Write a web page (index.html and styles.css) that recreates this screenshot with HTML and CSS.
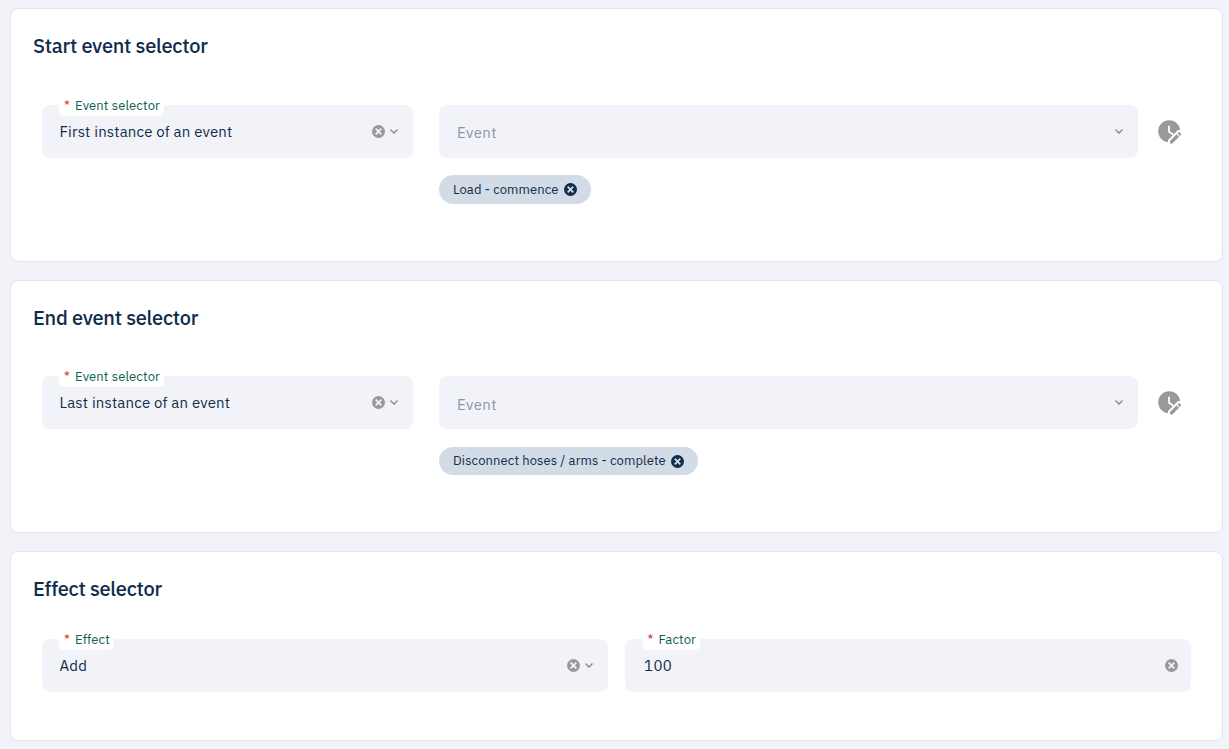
FILE: index.html
```html
<!DOCTYPE html>
<html lang="en">
  <head>
    <meta charset="UTF-8" />
    <meta name="viewport" content="width=device-width, initial-scale=1.0" />
    <title>Event selectors</title>
    <link rel="stylesheet" href="styles.css">
  </head>
  <body>
    <!-- shared icons -->
    <svg class="sprite" aria-hidden="true">
      <symbol id="clear" viewBox="0 0 13 13">
        <circle cx="6.5" cy="6.5" r="6.5" fill="currentColor" />
        <path d="M3.7 3.7l5.6 5.6M9.3 3.7L3.7 9.3" stroke="var(--cross)" stroke-width="1.8" />
      </symbol>
      <symbol id="chevron" viewBox="0 0 8 5">
        <path d="M.5 .6L4 4.1L7.5 .6" fill="none" stroke="currentColor" stroke-width="1.4" />
      </symbol>
      <symbol id="clock-edit" viewBox="0 0 24 24">
        <circle cx="11.2" cy="11.2" r="11" fill="currentColor" />
        <path d="M11 5.8V11.8L15.4 14.8" fill="none" stroke="#fff" stroke-width="1.8" />
        <path d="M10 26V20L20 10L26 10V26Z" fill="#fff" />
        <path d="M12 23.4V21L18.7 14.3L21.1 16.7L14.4 23.4ZM19.5 13.5L20.7 12.3Q21.1 12 21.5 12.3L23.1 13.9Q23.4 14.3 23.1 14.7L21.9 15.9Z" fill="currentColor" />
      </symbol>
    </svg>

    <section class="card">
      <h2>Start event selector</h2>
      <div class="row">
        <div class="field selector">
          <label><span class="required">*</span>Event selector</label>
          <span class="value">First instance of an event</span>
          <svg class="clear"><use href="#clear" /></svg>
          <svg class="chevron"><use href="#chevron" /></svg>
        </div>
        <div class="event">
          <div class="field">
            <span class="placeholder">Event</span>
            <svg class="chevron"><use href="#chevron" /></svg>
          </div>
          <div class="chip">
            <span class="chip-text">Load - commence</span>
            <svg class="clear"><use href="#clear" /></svg>
          </div>
        </div>
        <svg class="clock-edit"><use href="#clock-edit" /></svg>
      </div>
    </section>

    <section class="card">
      <h2>End event selector</h2>
      <div class="row">
        <div class="field selector">
          <label><span class="required">*</span>Event selector</label>
          <span class="value">Last instance of an event</span>
          <svg class="clear"><use href="#clear" /></svg>
          <svg class="chevron"><use href="#chevron" /></svg>
        </div>
        <div class="event">
          <div class="field">
            <span class="placeholder">Event</span>
            <svg class="chevron"><use href="#chevron" /></svg>
          </div>
          <div class="chip">
            <span class="chip-text">Disconnect hoses / arms - complete</span>
            <svg class="clear"><use href="#clear" /></svg>
          </div>
        </div>
        <svg class="clock-edit"><use href="#clock-edit" /></svg>
      </div>
    </section>

    <section class="card effect">
      <h2>Effect selector</h2>
      <div class="row">
        <div class="field">
          <label><span class="required">*</span>Effect</label>
          <span class="value">Add</span>
          <svg class="clear"><use href="#clear" /></svg>
          <svg class="chevron"><use href="#chevron" /></svg>
        </div>
        <div class="field factor">
          <label><span class="required">*</span>Factor</label>
          <span class="value">100</span>
          <svg class="clear"><use href="#clear" /></svg>
        </div>
      </div>
    </section>
  </body>
</html>
```
FILE: styles.css
```css
*,
*::before,
*::after {
  box-sizing: border-box;
}
body {
  margin: 0;
  padding: 8.25px 6px 0 10px;
  background: #f2f3f8;
  color: #0f2d4a;
  font-family: "IBM Plex Sans", Roboto, sans-serif;
  font-size: 15px;
  overflow: hidden;
}
svg {
  display: block;
  flex: none;
}
.sprite {
  position: absolute;
  width: 0;
  height: 0;
}

.card {
  height: 253.5px;
  margin-bottom: 18px;
  padding: 23px 22px 0;
  background: #fff;
  border: 1px solid #e1e5ee;
  border-radius: 8px;
}
h2 {
  margin: 0 0 44.5px;
  font-size: 20px;
  font-weight: 500;
  line-height: 28px;
  letter-spacing: -0.26px;
}
.row {
  display: flex;
  align-items: flex-start;
  padding: 0 9px;
}

.field {
  position: relative;
  display: flex;
  align-items: center;
  height: 53px;
  padding: 0 15px 0 17.5px;
  background: #f2f3f8;
  border-radius: 8px;
}
.selector {
  width: 371px;
  margin-right: 26px;
}
.event {
  width: 699px;
}
.value,
.placeholder {
  flex: 1;
  line-height: 20px;
}
.value {
  padding-top: 0.6px;
  letter-spacing: 0.18px;
}
.placeholder {
  padding: 3.6px 0 0 0.5px;
  color: #8797aa;
  letter-spacing: 0.35px;
}
/* label sits on the top edge of the field */
label {
  position: absolute;
  top: -10px;
  left: 17px;
  display: flex;
  height: 21px;
  padding: 0 4px 0 5px;
  background: #fff;
  border-radius: 5px;
  color: #0b6051;
  font-size: 13px;
  line-height: 21px;
  letter-spacing: 0.12px;
  white-space: nowrap;
}
.required {
  width: 11px;
  color: #d0342c;
}

.clear {
  --cross: #f2f3f8;
  width: 13px;
  height: 13px;
  color: #999;
}
.chevron {
  width: 8px;
  height: 5px;
  color: #8d8d8d;
}
.clear + .chevron {
  margin-left: 5px;
}
.clock-edit {
  width: 24px;
  height: 24px;
  margin: 15px 0 0 20px;
  color: #999;
}

.chip {
  display: flex;
  align-items: center;
  width: fit-content;
  height: 28.5px;
  margin-top: 17.5px;
  padding: 0 14px;
  background: #d3dbe7;
  border-radius: 15px;
  font-size: 13px;
  letter-spacing: 0.1px;
}
.chip-text {
  padding-bottom: 0.5px;
}
.chip .clear {
  --cross: #d3dbe7;
  margin-left: 5.5px;
  color: #0f2d4a;
}

.effect {
  height: 190px;
  margin-bottom: 0;
}
.effect h2 {
  margin-bottom: 35.75px;
}
.effect .row {
  gap: 17px;
}
.effect .field {
  width: 566px;
}
.effect .factor {
  padding: 0 13px 0 19px;
}
.factor label {
  left: 17.5px;
}
.factor .value {
  letter-spacing: 0.4px;
}
.factor .clear {
  margin-bottom: 1px;
}
```
